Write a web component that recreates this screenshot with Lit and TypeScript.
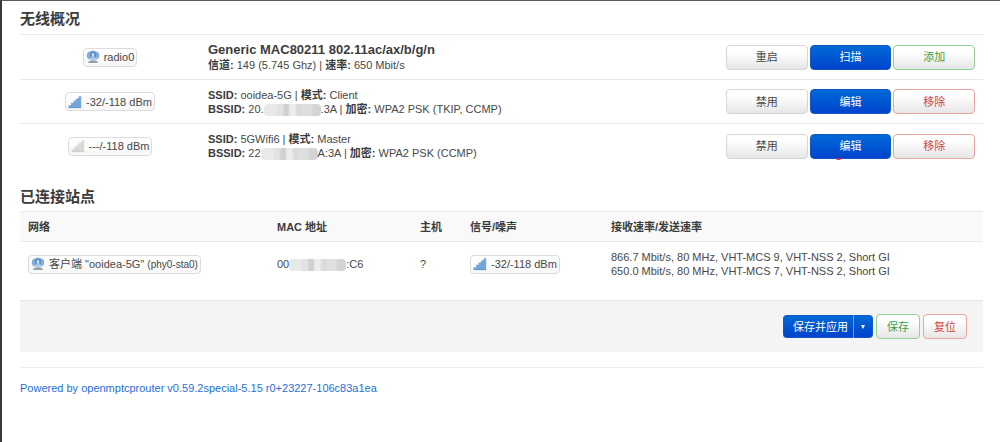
import { LitElement, html, css, svg } from "lit";
import { customElement, property } from "lit/decorators.js";

type Tone = "neutral" | "action" | "positive" | "negative";
interface Action { label: string; tone: Tone; marked?: boolean }
interface Network {
  ssid: string; mode: string; head: string; tail: string;
  cipher: string; signal: string; up: boolean; last?: boolean;
}

const networks: Network[] = [
  { ssid: "ooidea-5G", mode: "Client", head: "20.", tail: ".3A", cipher: "WPA2 PSK (TKIP, CCMP)", signal: "-32/-118 dBm", up: true },
  { ssid: "5GWifi6", mode: "Master", head: "22", tail: "A:3A", cipher: "WPA2 PSK (CCMP)", signal: "---/-118 dBm", up: false, last: true },
];

@customElement("status-icon")
class StatusIcon extends LitElement {
  @property() kind = "radio";

  static styles = css`
    :host { display: block; flex: none; width: 14px; height: 14px; }
    svg { display: block; width: 100%; height: 100%; }
  `;

  render() {
    if (this.kind === "radio") {
      return html`<svg viewBox="0 0 14 14" aria-hidden="true">
        <ellipse cx="7" cy="5.6" rx="6.2" ry="5" fill="#a5c4e6"/>
        <path d="M2.9 2.4A5 5 0 0 0 2.9 8.6M11.1 2.4A5 5 0 0 1 11.1 8.6" fill="none" stroke="#7ba8da" stroke-width="1.6"/>
        <circle cx="7" cy="5" r="3.7" fill="#5b91cf"/>
        <path d="M7 4.4L4.6 10.6M7 4.4l2.4 6.2M5.6 8.2h2.8" fill="none" stroke="#c8d6e4" stroke-width="1.1"/>
        <circle cx="7" cy="4.4" r="1.2" fill="#dbe6f2"/>
        <path d="M3 11h8l1.2 2H1.8z" fill="#9ba4ac"/>
        <path d="M4.4 10.6h5.2v1H4.4z" fill="#7f95ab"/>
      </svg>`;
    }
    const on = this.kind === "signal";
    return html`<svg viewBox="0 0 14 14" aria-hidden="true">
      <path d="M0.6 13V10.2H3.1V7.8H5.6V5.6H8.1V3.4H10.6V1.2H13.2V13z" fill=${on ? "#76a7dc" : "#dcdcd8"}/>
      ${[3.1, 5.6, 8.1, 10.6].map((x, i) => svg`<path d="M${x} ${10.2 - i * 2.2}V13"
        stroke=${on ? "#6a9dd4" : "#cacac6"} stroke-width="0.6"/>`)}
      <path d="M0.6 12.7h12.6" stroke=${on ? "#5a90ca" : "#c6c6c2"} stroke-width="0.7"/>
    </svg>`;
  }
}

@customElement("app-root")
class AppRoot extends LitElement {
  static styles = css`
    :host {
      display: block;
      box-sizing: border-box;
      min-height: 100vh;
      padding: 8px 17px 24px 18px;
      border-top: 1px solid #5b5a5e;
      border-left: 2px solid #38373b;
      background: #fff;
      color: #484848;
      font: 11px/14px "Liberation Sans", "Noto Sans CJK SC", sans-serif;
    }
    * { box-sizing: border-box; }
    .title { margin: 0; color: #3c3c3c; font-size: 15px; line-height: 20px; font-weight: 700; }
    .overview-title { padding-bottom: 5px; }
    .stations-title { margin-top: 19px; padding-bottom: 4px; }
    table { width: 100%; border-collapse: separate; border-spacing: 0; }
    td, th { padding: 0 8px; text-align: left; vertical-align: middle; }
    .overview td { height: 45px; border-top: 1px solid #e9e9e9; }
    .overview .network td { height: 44px; }
    .overview .network:last-child td { height: 45px; }
    .overview .status { width: 180px; text-align: center; }
    .overview .controls { width: 265px; }
    .stations th { height: 31px; background: #f9f9f9; border: solid #e9e9e9; border-width: 1px 0; color: #3c3c3c; }
    .stations td { height: 44px; }
    .col-net { width: 249px; }
    .col-mac { width: 143px; }
    .col-host { width: 50px; }
    .col-signal { width: 141px; }
    .device { color: #3c3c3c; font-size: 13px; line-height: 16px; font-weight: 700; }
    b { color: #3c3c3c; }
    .badge {
      display: inline-flex; align-items: center; gap: 4px; vertical-align: middle;
      height: 19px; padding: 0 2px; border: 1px solid #dcdcdc; border-radius: 4px;
      background: linear-gradient(#fff, #f7f7f7); white-space: nowrap;
    }
    small { font-size: 10px; }
    .mask {
      display: inline-block; width: 57px; height: 12px; vertical-align: -3px; border-radius: 4px;
      background: linear-gradient(90deg, #e9e9e9 0 20%, #e2e2e3 24% 32%, #d0d0d2 36% 42%, #ececec 46% 54%,
        #dadadc 58% 64%, #dedfe0 68% 82%, #d4d4d6 86%);
    }
    .actions { display: grid; grid-template-columns: repeat(3, 1fr); gap: 2px; }
    button {
      position: relative; height: 25px; margin: 0; padding: 0 10px;
      border: 1px solid #d6d6d6; border-radius: 4px;
      background: linear-gradient(#fff 25%, #e6e6e6); color: #484848;
      font: inherit; white-space: nowrap;
    }
    .action { border-color: #1259c8; background: linear-gradient(#0069d6, #0044cc); color: #fff; }
    .positive { border-color: #93d193; color: #3ea33e; }
    .negative { border-color: #eda3a3; color: #d43f3f; }
    .marked::after {
      content: ""; position: absolute; left: 25px; bottom: -2px; width: 5px; height: 2px;
      border-radius: 50%; background: #e0243f;
    }
    .page-actions {
      display: flex; justify-content: flex-end; align-items: center; gap: 3px;
      margin-top: 14px; padding: 13px 16px; border-top: 1px solid #e4e4e4; background: #f4f4f4;
    }
    .split { display: flex; }
    .split button { height: 23px; }
    .apply { border-radius: 4px 0 0 4px; border-right: 0; padding: 0 5px 0 9px; }
    .more { width: 20px; padding: 0; border-left-color: #6a9ee8; border-radius: 0 4px 4px 0; display: grid; place-items: center; }
    .more svg { width: 4px; height: 4px; }
    footer { margin-top: 15px; padding-top: 13px; border-top: 1px solid #eee; }
    a { color: #1e6fdc; text-decoration: none; }
  `;

  private badge(kind: string, content: unknown) {
    return html`<span class="badge"><status-icon kind=${kind}></status-icon><span>${content}</span></span>`;
  }

  private actions(items: Action[]) {
    return html`<div class="actions">${items.map((a) =>
      html`<button type="button" class="${a.tone} ${a.marked ? "marked" : ""}">${a.label}</button>`)}</div>`;
  }

  private networkRow(n: Network) {
    return html`<tr class="network">
      <td class="status">${this.badge(n.up ? "signal" : "none", n.signal)}</td>
      <td>
        <div><b>SSID:</b> ${n.ssid} | <b>模式:</b> ${n.mode}</div>
        <div><b>BSSID:</b> ${n.head}<span class="mask"></span>${n.tail} | <b>加密:</b> ${n.cipher}</div>
      </td>
      <td class="controls">${this.actions([
        { label: "禁用", tone: "neutral" },
        { label: "编辑", tone: "action", marked: n.last },
        { label: "移除", tone: "negative" },
      ])}</td>
    </tr>`;
  }

  render() {
    return html`
      <main>
        <h3 class="title overview-title">无线概况</h3>
        <table class="overview">
          <tbody>
            <tr>
              <td class="status">${this.badge("radio", "radio0")}</td>
              <td>
                <div class="device">Generic MAC80211 802.11ac/ax/b/g/n</div>
                <div><b>信道:</b> 149 (5.745 Ghz) | <b>速率:</b> 650 Mbit/s</div>
              </td>
              <td class="controls">${this.actions([
                { label: "重启", tone: "neutral" },
                { label: "扫描", tone: "action" },
                { label: "添加", tone: "positive" },
              ])}</td>
            </tr>
            ${networks.map((n) => this.networkRow(n))}
          </tbody>
        </table>
        <h3 class="title stations-title">已连接站点</h3>
        <table class="stations">
          <thead>
            <tr>
              <th class="col-net">网络</th>
              <th class="col-mac">MAC 地址</th>
              <th class="col-host">主机</th>
              <th class="col-signal">信号/噪声</th>
              <th>接收速率/发送速率</th>
            </tr>
          </thead>
          <tbody>
            <tr>
              <td>${this.badge("radio", html`客户端 "ooidea-5G" <small>(phy0-sta0)</small>`)}</td>
              <td>00<span class="mask"></span>:C6</td>
              <td>?</td>
              <td>${this.badge("signal", "-32/-118 dBm")}</td>
              <td>866.7 Mbit/s, 80 MHz, VHT-MCS 9, VHT-NSS 2, Short GI<br />650.0 Mbit/s, 80 MHz, VHT-MCS 7, VHT-NSS 2, Short GI</td>
            </tr>
          </tbody>
        </table>
        <div class="page-actions">
          <div class="split">
            <button type="button" class="action apply">保存并应用</button>
            <button type="button" class="action more" aria-label="更多">
              <svg viewBox="0 0 4 4" aria-hidden="true"><path d="M0 0h4L2 4z" fill="#fff"/></svg>
            </button>
          </div>
          <button type="button" class="positive">保存</button>
          <button type="button" class="negative">复位</button>
        </div>
      </main>
      <footer><a href="#">Powered by openmptcprouter v0.59.2special-5.15 r0+23227-106c83a1ea</a></footer>
    `;
  }
}
